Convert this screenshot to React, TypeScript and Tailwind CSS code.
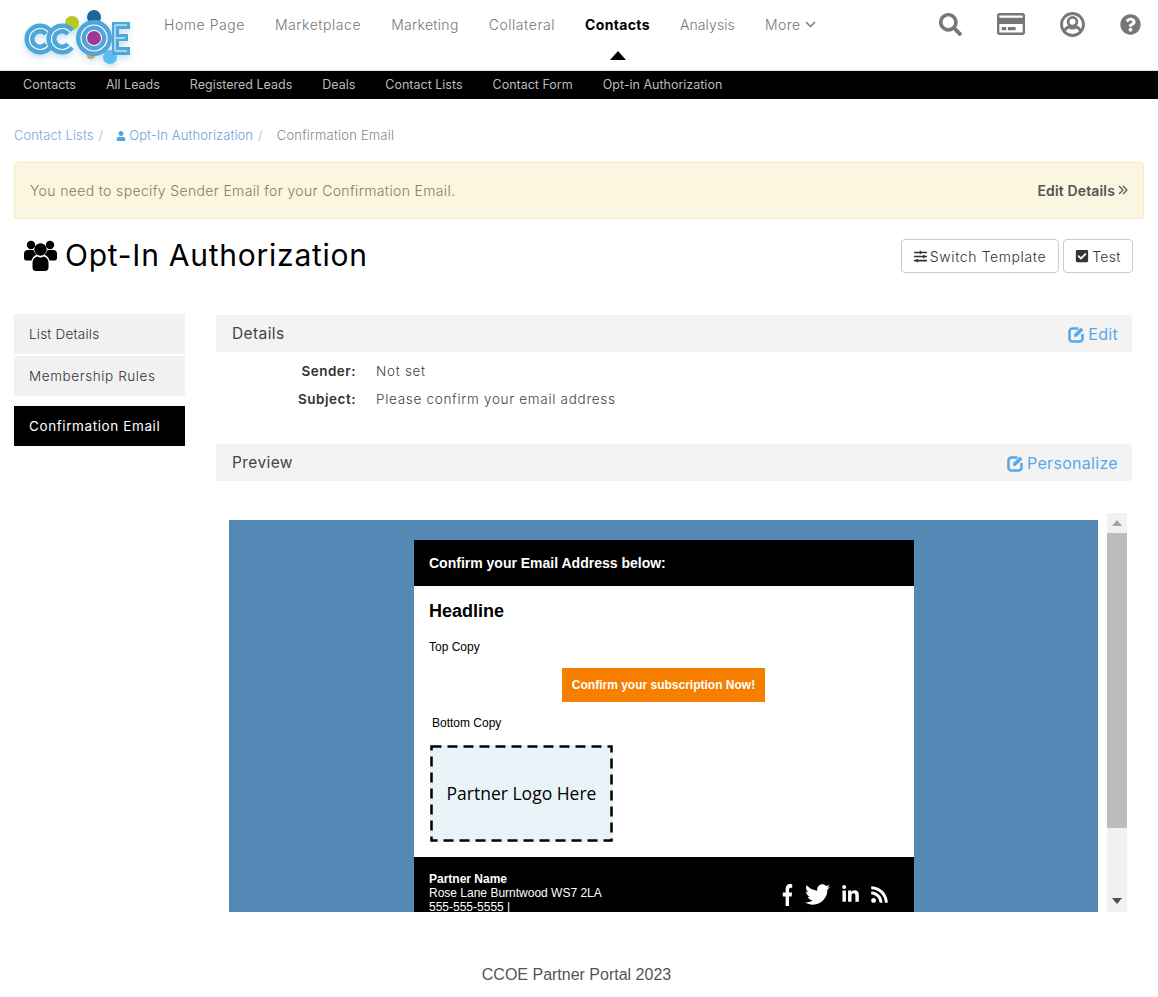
import React from "react";
import {
  FaSearch, FaRegCreditCard, FaQuestionCircle, FaUser, FaSlidersH,
  FaCheckSquare, FaFacebookF, FaTwitter, FaLinkedinIn, FaRss,
} from "react-icons/fa";

const font = "[font-family:Inter,'Liberation_Sans',sans-serif]";

function CArc({ cx, cy, r }: { cx: number; cy: number; r: number }) {
  const d = `M${cx + 0.766 * r} ${cy - 0.643 * r}A${r} ${r} 0 1 0 ${cx + 0.766 * r} ${cy + 0.643 * r}`;
  return (
    <g fill="none">
      <path d={d} stroke="#4fa6d8" strokeWidth="10" />
      <path d={d} stroke="#ffffff" strokeWidth="1.2" />
    </g>
  );
}

function Logo() {
  return (
    <svg width="112" height="60" viewBox="0 0 112 60" className="block drop-shadow-[0_3px_3px_#4fa6d855]">
      <circle cx="48" cy="14" r="7" fill="#b9c81e" />
      <circle cx="70" cy="8" r="7" fill="#1f6499" />
      <circle cx="67" cy="46" r="4" fill="#dd9f57" />
      <CArc cx={16} cy={30} r={10.5} />
      <CArc cx={38} cy={30} r={10.5} />
      <circle cx="70" cy="29" r="13" fill="#ffffff" stroke="#4fa6d8" strokeWidth="10" />
      <circle cx="70" cy="29" r="13" fill="none" stroke="#ffffff" strokeWidth="1.2" />
      <circle cx="70" cy="29" r="7" fill="#9e3a91" />
      <circle cx="86" cy="48" r="7" fill="#5cbdf0" />
      <path d="M88 13h18v7H95v5h9v7h-9v6h11v8H88z" fill="#4fa6d8" />
      <path d="M91 16h12M91 29h10M91 42h12M91 16v26" stroke="#fff" strokeWidth="1" fill="none" />
    </svg>
  );
}

function UsersIcon() {
  return (
    <svg width="33" height="31" viewBox="0 0 33 31" fill="currentColor">
      <circle cx="7" cy="5" r="4.2" />
      <circle cx="26" cy="5" r="4.2" />
      <path d="M0 13.5C0 11.5 1.5 10 3.5 10h6c.6 2 1.6 3.6 3 4.8-2.6 1.2-4.4 3.2-5 5.7H3c-1.8 0-3-1-3-2.6z" />
      <path d="M33 13.5c0-2-1.500-3.500-3.500-3.500h-6c-.6 2-1.600 3.600-3 4.800 2.600 1.200 4.400 3.200 5 5.700H30c1.800 0 3-1 3-2.600z" />
      <circle cx="16.500" cy="9.500" r="6.200" />
      <path d="M8.500 23c0-3.600 2-6 5-6.500 1.800 1.200 4.200 1.200 6 0 3 .5 5 2.900 5 6.500v4.500c0 2-1.300 3.500-3.300 3.500H11.800c-2 0-3.300-1.500-3.300-3.500z" />
    </svg>
  );
}

function UserCircle() {
  return (
    <svg width="25" height="25" viewBox="0 0 25 25" fill="none" stroke="currentColor" strokeWidth="2.8">
      <circle cx="12.500" cy="12.500" r="11" />
      <circle cx="12.500" cy="9.800" r="4.400" />
      <path d="M4.200 20c1-3.200 2.800-4.800 5-5 1.800 1.100 4.800 1.100 6.600 0 2.200.2 4 1.800 5 5" />
    </svg>
  );
}

function EditIcon() {
  return (
    <svg width="17" height="17" viewBox="0 0 17 17" fill="none" stroke="currentColor">
      <path d="M10.500 2.500H4.500a3 3 0 0 0-3 3v7a3 3 0 0 0 3 3h7a3 3 0 0 0 3-3V8" strokeWidth="2.600" />
      <path d="M6.500 10.500v-2.200L12.800 2l2.200 2.200-6.300 6.300z" fill="currentColor" strokeWidth="0.800" />
    </svg>
  );
}

function SectionBar({ title, action }: { title: string; action: string }) {
  return (
    <div className="flex h-[37px] items-center justify-between bg-[#f3f3f3] pl-[16px] pr-[14px]">
      <span className="text-[15.5px] tracking-[0.4px] text-[#444]">{title}</span>
      <span className="flex items-center gap-[3px] pt-px text-[16px] tracking-[0.3px] text-[#5aa9e6]">
        <EditIcon />
        {action}
      </span>
    </div>
  );
}

export default function App() {
  const main = [
    { label: "Home Page", cls: "tracking-[0.55px]" },
    { label: "Marketplace", cls: "tracking-[0.55px]" },
    { label: "Marketing", cls: "tracking-[0.3px]" },
    { label: "Collateral", cls: "tracking-[0.55px]" },
  ];
  const sub = ["Contacts", "All Leads", "Registered Leads", "Deals", "Contact Lists", "Contact Form", "Opt-in Authorization"];
  return (
    <div className={`${font} h-[997px] w-[1158px] overflow-hidden bg-white`}>
      <header className="flex h-[71px] border-b border-[#e2e2e2] bg-white">
        <div className="ml-[24px] mt-[9px] w-[140px]"><Logo /></div>
        <nav className="flex h-[48px] items-center gap-[30px] text-[14px] font-light tracking-[0.45px] text-[#777]">
          {main.map((m) => <span key={m.label} className={m.cls}>{m.label}</span>)}
          <span className="relative font-bold tracking-[0.35px] text-black">
            Contacts
            <span className="absolute left-[25px] top-[37px] h-0 w-0 border-x-[8px] border-b-[9px] border-x-transparent border-b-black" />
          </span>
          <span className="tracking-[0.1px]">Analysis</span>
          <span className="flex items-center gap-[4px]">
            More
            <svg width="11" height="7" viewBox="0 0 11 7" fill="none" stroke="currentColor" strokeWidth="1.500"><path d="M1 1l4.500 4.500L10 1" /></svg>
          </span>
        </nav>
        <div className="ml-auto flex h-[48px] items-center gap-[35px] pr-[17px] text-[#777]">
          <FaSearch className="text-[23px]" />
          <FaRegCreditCard className="text-[28px]" />
          <UserCircle />
          <FaQuestionCircle className="text-[21px]" />
        </div>
      </header>
      <div className="flex h-[28px] items-center gap-[30px] bg-black pl-[23px] pt-px text-[12.5px] text-[#bbb]">
        {sub.map((s) => <span key={s}>{s}</span>)}
      </div>

      <div className="px-[14px]">
        <div className="flex h-[63px] items-center pt-[10px] text-[13px] font-light tracking-[0.1px]">
          <span className="text-[#7fa6dc]">Contact Lists</span>
          <span className="ml-[5px] text-[#bbb]">/</span>
          <span className="ml-[13px] flex items-center gap-[3px] text-[#6f9fdc]"><FaUser className="text-[10px] text-[#4ea5dc]" />Opt-In Authorization</span>
          <span className="ml-[5px] text-[#bbb]">/</span>
          <span className="ml-[14px] tracking-[0.2px] text-[#888]">Confirmation Email</span>
        </div>
        <div className="flex h-[57px] w-[1130px] items-center justify-between rounded-[3px] border border-[#f7e8c0] bg-[#faf6df] pb-px pl-[15px] pr-[15px] text-[14px] font-light text-[#8a7a5c]">
          <span className="tracking-[0.35px]">You need to specify Sender Email for your Confirmation Email.</span>
          <span className="flex items-center gap-[3px] font-semibold tracking-[0.15px] text-[#555]">
            Edit Details
            <svg width="10" height="10" viewBox="0 0 10 10" fill="none" stroke="currentColor" strokeWidth="1.200"><path d="M1 1l4 4-4 4M5 1l4 4-4 4" /></svg>
          </span>
        </div>

        <div className="mt-[20px] flex h-[34px] w-[1119px] items-center justify-between">
          <h1 className="flex items-center gap-[8px] pb-px pl-[10px] text-[30px] font-normal tracking-[0.75px] text-black">
            <UsersIcon />Opt-In Authorization
          </h1>
          <div className="flex gap-[4px]">
            <button className="flex h-[34px] w-[158px] items-center justify-center gap-[3px] rounded-[4px] border border-[#ccc] text-[14px] font-light tracking-[0.6px] text-[#333]">
              <FaSlidersH className="text-[13px]" />Switch Template
            </button>
            <button className="flex h-[34px] w-[70px] items-center justify-center gap-[3px] rounded-[4px] border border-[#ccc] text-[14px] font-light tracking-[0.3px] text-[#333]">
              <FaCheckSquare className="text-[14px]" />Test
            </button>
          </div>
        </div>

        <div className="mt-[41px] flex">
          <aside className="w-[171px] text-[13.5px] tracking-[0.6px]">
            <div className="flex h-[40px] items-center bg-[#f1f1f1] pl-[15px] font-light tracking-[0.2px] text-[#333]">List Details</div>
            <div className="mt-[2px] flex h-[40px] items-center bg-[#f1f1f1] pl-[15px] font-light text-[#333]">Membership Rules</div>
            <div className="mt-[10px] flex h-[40px] items-center bg-black pl-[15px] text-white">Confirmation Email</div>
          </aside>
          <main className="ml-[31px] w-[916px]">
            <div className="mt-px"><SectionBar title="Details" action="Edit" /></div>
            <dl className="mt-[5px] text-[13.5px]">
              <div className="flex h-[28px] items-center">
                <dt className="w-[140px] text-right font-semibold tracking-[0.5px] text-[#333]">Sender:</dt>
                <dd className="ml-[20px] font-light tracking-[0.7px] text-[#444]">Not set</dd>
              </div>
              <div className="flex h-[28px] items-center">
                <dt className="w-[140px] text-right font-semibold tracking-[0.5px] text-[#333]">Subject:</dt>
                <dd className="ml-[20px] font-light tracking-[0.7px] text-[#444]">Please confirm your email address</dd>
              </div>
            </dl>
            <div className="mt-[31px]"><SectionBar title="Preview" action="Personalize" /></div>

            <div className="mt-[32px] flex h-[399px]">
              <div className="ml-[13px] mt-[7px] h-[392px] w-[869px] overflow-hidden bg-[#5588b5] pt-[20px] [font-family:'Liberation_Sans',Arial,sans-serif]">
                <div className="ml-[185px] w-[500px] bg-white">
                  <div className="flex h-[46px] items-center bg-black pl-[15px] text-[14px] font-bold text-white">Confirm your Email Address below:</div>
                  <div className="pl-[15px] pt-[15px] text-[18px] font-bold leading-[21px] text-black">Headline</div>
                  <div className="pl-[15px] pt-[18px] text-[12px] leading-[14px] text-black">Top Copy</div>
                  <div className="ml-[148px] mt-[14px] flex h-[34px] w-[203px] items-center justify-center bg-[#f77f00] text-[12px] font-bold text-white">Confirm your subscription Now!</div>
                  <div className="pl-[18px] pt-[14px] text-[12px] leading-[14px] text-black">Bottom Copy</div>
                  <div className="relative ml-[16px] mt-[15px] flex h-[97px] w-[183px] items-center justify-center bg-[#e8f3f8] text-[17.5px] text-black [font-family:'Open_Sans',sans-serif]">
                    Partner Logo Here
                    <svg width="183" height="97" viewBox="0 0 183 97" fill="none" className="absolute left-0 top-0">
                      <rect x="1.500" y="1.500" width="180" height="94" stroke="#000" strokeWidth="2.500" strokeDasharray="10 6" />
                    </svg>
                  </div>
                  <div className="mt-[15px] flex h-[80px] items-start justify-between bg-black pl-[15px] pr-[25px] pt-[15px] text-[12px] leading-[14px] text-white">
                    <div>
                      <div className="font-bold">Partner Name</div>
                      <div>Rose Lane Burntwood WS7 2LA</div>
                      <div>555-555-5555 |</div>
                    </div>
                    <div className="mt-[10px] flex items-center gap-[10px]">
                      <FaFacebookF preserveAspectRatio="none" className="h-[22px] w-[11px]" />
                      <FaTwitter className="ml-[2px] text-[25px]" />
                      <FaLinkedinIn className="ml-px text-[19px]" />
                      <FaRss className="text-[19px]" />
                    </div>
                  </div>
                </div>
              </div>
              <div className="ml-[9px] flex w-[20px] flex-col items-center bg-[#f1f1f1]">
                <div className="flex h-[20px] items-center">
                  <span className="h-0 w-0 border-x-[5px] border-b-[6px] border-x-transparent border-b-[#a3a3a3]" />
                </div>
                <div className="h-[295px] w-full bg-[#bcbcbc]" />
                <div className="mt-auto flex h-[20px] items-center pb-[3px]">
                  <span className="h-0 w-0 border-x-[5px] border-t-[6px] border-x-transparent border-t-[#505050]" />
                </div>
              </div>
            </div>
          </main>
        </div>
      </div>
      <footer className="mt-[51px] text-center text-[16px] text-[#555] [font-family:'Liberation_Sans',Arial,sans-serif]">
        <span className="ml-[-5px]">CCOE Partner Portal 2023</span>
      </footer>
    </div>
  );
}
